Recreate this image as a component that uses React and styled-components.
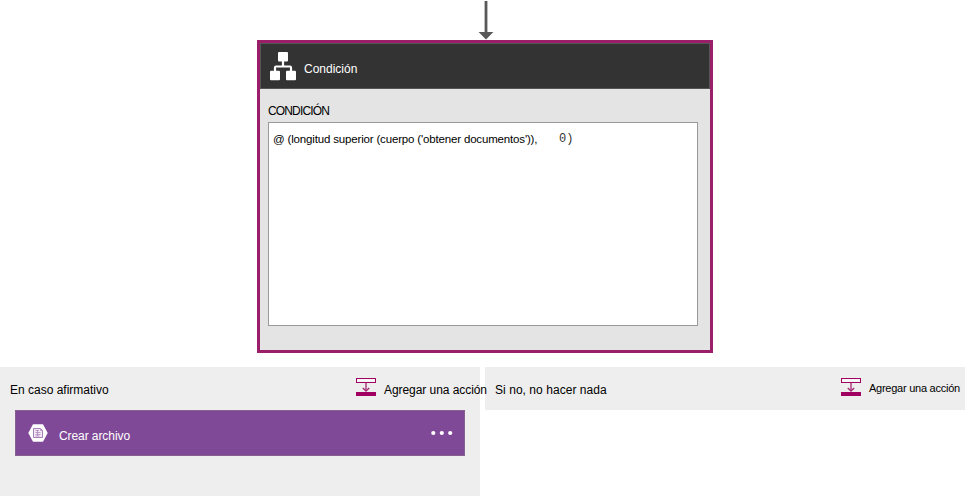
import React from "react";
import styled, { createGlobalStyle } from "styled-components";

const GlobalStyle = createGlobalStyle`
  * { box-sizing: border-box; }
  body { margin: 0; background: #fff; overflow: hidden; }
`;

const Page = styled.main`
  width: 965px;
  height: 496px;
  overflow: hidden;
  display: flex;
  flex-direction: column;
  font-family: "Liberation Sans", Arial, sans-serif;
  color: #000;
`;

const Text = styled.span`
  display: block;
  flex: none;
  font-size: ${(p) => p.$size || 12}px;
  line-height: 16px;
  letter-spacing: ${(p) => p.$tracking || 0}px;
  white-space: pre;
`;

const Arrow = styled.svg`
  display: block;
  flex: none;
  margin-left: 478px;
`;

const Card = styled.section`
  flex: none;
  width: 456px;
  height: 313px;
  margin-left: 257px;
  border: 3px solid #9b1e68;
  background: #e4e4e4;
`;

const CardHeader = styled.header`
  height: 46px;
  display: flex;
  align-items: flex-start;
  gap: 8px;
  padding: 8px 0 0 9px;
  background: #333;
  border: 1px solid #555;
  color: #fff;
  ${Text} { margin-top: 9px; }
`;

const CardBody = styled.div`
  padding: 14px 12px 0 8px;
`;

const Editor = styled.div`
  height: 204px;
  margin-top: 3px;
  display: flex;
  padding: 8px 0 0 4px;
  background: #fff;
  border: 1px solid #999;
`;

const Literal = styled(Text)`
  width: 16px;
  margin-left: auto;
  margin-right: 122px;
  font-family: "Liberation Mono", monospace;
  color: #333;
`;

const Branches = styled.div`
  flex: none;
  display: grid;
  grid-template-columns: 480px 480px;
  gap: 5px;
  height: 129px;
  margin-top: 14px;
  align-items: start;
`;

const Branch = styled.section`
  height: ${(p) => p.$height}px;
  background: #eee;
`;

const BranchHeader = styled.div`
  height: 43px;
  display: flex;
  align-items: flex-start;
  padding: 15px 0 0 10px;
`;

/* Raised so that a long label stays visible over the neighbouring branch. */
const AddAction = styled.button`
  position: relative;
  z-index: 1;
  display: flex;
  align-items: flex-start;
  gap: 8px;
  width: 124px;
  margin: -5px 0 0 auto;
  padding: 0;
  border: 0;
  background: none;
  font: inherit;
  color: inherit;
  text-align: left;
  svg { flex: none; }
  ${Text} { margin-top: ${(p) => p.$drop}px; }
`;

const Action = styled.div`
  width: 450px;
  height: 46px;
  margin-left: 15px;
  display: flex;
  align-items: flex-start;
  padding: 13px 11px 0 12px;
  background: #804998;
  border: 1px solid #86608f;
  color: #fff;
  ${Text} { margin: 4px 0 0 11px; }
`;

const Dots = styled.svg`
  margin: 6px 0 0 auto;
`;

const ConditionIcon = () => (
  <svg width="26" height="29" viewBox="0 0 26 29">
    <g fill="#fff">
      <rect x="8" y="0" width="10" height="9.5" rx="1" />
      <rect x="0" y="18.7" width="10" height="9.5" rx="1" />
      <rect x="16" y="18.7" width="10" height="9.5" rx="1" />
    </g>
    <path d="M13 9v5.5M5 20v-4.5q0-1 1-1h14q1 0 1 1V20" fill="none" stroke="#fff" strokeWidth="2.2" />
  </svg>
);

const InsertIcon = () => (
  <svg width="20" height="19" viewBox="0 0 20 19">
    <rect x="0.5" y="1.5" width="19" height="4" fill="#f6f6f6" stroke="#a0005f" />
    <path d="M10 6v7.5" stroke="#b04a88" strokeWidth="1.6" />
    <path d="M6.8 11L10 14l3.2-3" fill="none" stroke="#a52a76" strokeWidth="1.4" />
    <rect y="15" width="20" height="4" fill="#a0005f" />
  </svg>
);

const FileIcon = () => (
  <svg width="20" height="18" viewBox="0 0 20 18">
    <path d="M5 .3h10L19.7 9 15 17.7H5L.3 9z" fill="#fff" />
    <path d="M5.5 4.5h7l2 2v7h-9z" fill="#f3eaf5" stroke="#a77db8" />
    <path d="M12.5 4.5v2h2M7.5 6.5h3.5M7.5 8.5h5M7.5 10.5h5M7.5 12h4M9.5 6v6" fill="none" stroke="#b08abd" strokeWidth=".8" />
  </svg>
);

export default function App() {
  return (
    <>
      <GlobalStyle />
      <Page>
        <Arrow width="16" height="40" viewBox="0 0 16 40">
          <path d="M6.6 1h2.8v31h6L8 39.6.6 32h6z" fill="#595959" />
        </Arrow>
        <Card>
          <CardHeader>
            <ConditionIcon />
            <Text>Condición</Text>
          </CardHeader>
          <CardBody>
            <Text $tracking={-0.85}>CONDICIÓN</Text>
            <Editor>
              <Text $size={11.5} $tracking={-0.165}>@ (longitud superior (cuerpo ('obtener documentos')),</Text>
              <Literal>0)</Literal>
            </Editor>
          </CardBody>
        </Card>
        <Branches>
          <Branch $height={129}>
            <BranchHeader>
              <Text>En caso afirmativo</Text>
              <AddAction $drop={5}>
                <InsertIcon />
                <Text $tracking={-0.06}>Agregar una acción</Text>
              </AddAction>
            </BranchHeader>
            <Action>
              <FileIcon />
              <Text $tracking={-0.08}>Crear archivo</Text>
              <Dots width="22" height="6" viewBox="0 0 22 6">
                <g fill="#fff">
                  <circle cx="2.3" cy="3" r="2.1" />
                  <circle cx="10.8" cy="3" r="2.1" />
                  <circle cx="19.2" cy="3" r="2.1" />
                </g>
              </Dots>
            </Action>
          </Branch>
          <Branch $height={43}>
            <BranchHeader>
              <Text $tracking={0.05}>Si no, no hacer nada</Text>
              <AddAction $drop={3}>
                <InsertIcon />
                <Text $size={11} $tracking={-0.25}>Agregar una acción</Text>
              </AddAction>
            </BranchHeader>
          </Branch>
        </Branches>
      </Page>
    </>
  );
}
